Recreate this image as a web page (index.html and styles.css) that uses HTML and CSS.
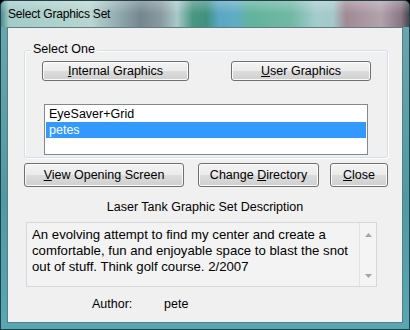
FILE: index.html
```html
<!DOCTYPE html>
<html lang="en">

<head>
  <meta charset="UTF-8" />
  <title>Select Graphics Set</title>
  <link rel="stylesheet" href="styles.css">
</head>

<body>
  <div class="window">
    <div class="titlebar">Select Graphics Set</div>

    <div class="client">
      <div class="group">
        <span class="group-label">Select One</span>
        <div class="group-buttons">
          <button class="btn btn-internal"><u>I</u>nternal Graphics</button>
          <button class="btn btn-user"><u>U</u>ser Graphics</button>
        </div>
        <ul class="listbox">
          <li>EyeSaver+Grid</li>
          <li class="selected">petes</li>
        </ul>
      </div>

      <div class="actions">
        <button class="btn btn-view"><u>V</u>iew Opening Screen</button>
        <button class="btn btn-dir">Change <u>D</u>irectory</button>
        <button class="btn btn-close"><u>C</u>lose</button>
      </div>

      <div class="desc-title">Laser Tank Graphic Set Description</div>

      <div class="desc">
        <p class="desc-text">An evolving attempt to find my center and create a comfortable, fun and enjoyable space to blast the snot out of stuff. Think golf course. 2/2007</p>
        <div class="scrollbar">
          <svg width="7" height="4" viewBox="0 0 7 4"><path d="M0 4 L3.5 0 L7 4 Z" fill="#a6a6a6" /></svg>
          <svg width="7" height="4" viewBox="0 0 7 4"><path d="M0 0 L3.5 4 L7 0 Z" fill="#a6a6a6" /></svg>
        </div>
      </div>

      <div class="author">
        <span class="author-label">Author:</span>
        <span>pete</span>
      </div>
    </div>
  </div>
</body>

</html>
```

FILE: styles.css
```css
body {
  margin: 0;
  font-family: "Liberation Sans", Arial, sans-serif;
  background: #000;
}

.window {
  width: 410px;
  height: 330px;
  box-sizing: border-box;
  border: 1px solid #24404a;
  border-radius: 6px 6px 0 0;
  background: linear-gradient(180deg, #6aa8ae 0%, #4f9aa2 60%, #56a8b2 100%);
  overflow: hidden;
}

.titlebar {
  height: 26px;
  padding-left: 7px;
  font-size: 12px;
  letter-spacing: -0.2px;
  line-height: 26px;
  color: #000;
  background:
    linear-gradient(180deg, rgba(255, 255, 255, 0.25) 0%, rgba(255, 255, 255, 0) 50%),
    linear-gradient(90deg, #4b8d90 0px, #a3cbc7 8px, #b8d5d0 90px, #8fa9ad 118px, #74868f 140px, #8a9aa0 160px,
      #a8c9c8 176px, #4a9682 192px, #3f917e 205px, #5aa6c4 218px, #60acc4 234px, #62b39c 250px, #72b8a4 290px,
      #a4cccd 315px, #a6c8c9 332px, #a08a94 345px, #b2a2ac 380px, #8a7684 400px, #3e4248 409px);
}

.client {
  width: 396px;
  height: 296px;
  box-sizing: border-box;
  margin-left: 6px;
  border: 1px solid #5f7b84;
  background: #f0f0f0;
  font-size: 12.5px;
  color: #000;
}

/* group box */
.group {
  position: relative;
  width: 364px;
  height: 108px;
  box-sizing: border-box;
  margin: 22px 0 0 16px;
  padding: 10px 16px 0 17px;
  border: 1px solid #d5dfe5;
  border-radius: 3px;
  box-shadow: inset 1px 1px 0 #fff, 1px 1px 0 #fff;
}

.group-label {
  position: absolute;
  left: 6px;
  top: -10px;
  padding: 0 2px;
  background: #f0f0f0;
  line-height: 16px;
}

.group-buttons {
  display: flex;
  justify-content: space-between;
}

.btn {
  height: 20px;
  padding: 0;
  font-family: "Liberation Sans", Arial, sans-serif;
  font-size: 12.5px;
  color: #000;
  border: 1px solid #707070;
  border-radius: 3px;
  background: linear-gradient(180deg, #f4f4f4 0%, #ebebeb 48%, #dcdcdc 52%, #cfcfcf 100%);
  box-shadow: inset 0 0 0 1px #fafafa;
}

.btn-internal { width: 147px; }
.btn-user { width: 140px; }

.listbox {
  list-style: none;
  width: 324px;
  height: 51px;
  box-sizing: border-box;
  margin: 23px 0 0 2px;
  padding: 1px;
  border: 1px solid #828790;
  background: #fff;
}

.listbox li {
  height: 16px;
  padding-left: 3px;
  line-height: 16px;
}

.listbox .selected {
  background: #3399ff;
  color: #fff;
}

/* buttons under the group */
.actions {
  display: flex;
  margin: 5px 0 0 16px;
}

.actions .btn { height: 24px; }
.btn-view { width: 160px; }
.btn-dir { width: 121px; margin-left: 14px; }
.btn-close { width: 58px; margin-left: 11px; }

.desc-title {
  margin-top: 12px;
  line-height: 16px;
  text-align: center;
}

.desc {
  display: flex;
  width: 351px;
  height: 65px;
  box-sizing: border-box;
  margin: 7px 0 0 18px;
  border: 1px solid #d3d8dc;
  background: #f3f3f3;
}

.desc-text {
  flex: 1;
  margin: 0;
  padding: 4px 10px 0 5px;
  font-size: 13.2px;
  line-height: 16px;
}

.scrollbar {
  width: 17px;
  display: flex;
  flex-direction: column;
  justify-content: space-between;
  align-items: center;
  padding: 10px 0 8px;
  box-sizing: border-box;
  border-left: 1px solid #e2e2e2;
  background: #f4f4f4;
}

.scrollbar svg { display: block; }

.author {
  display: flex;
  margin-top: 9px;
  padding-left: 84px;
  line-height: 16px;
}

.author-label { width: 72px; }
```
